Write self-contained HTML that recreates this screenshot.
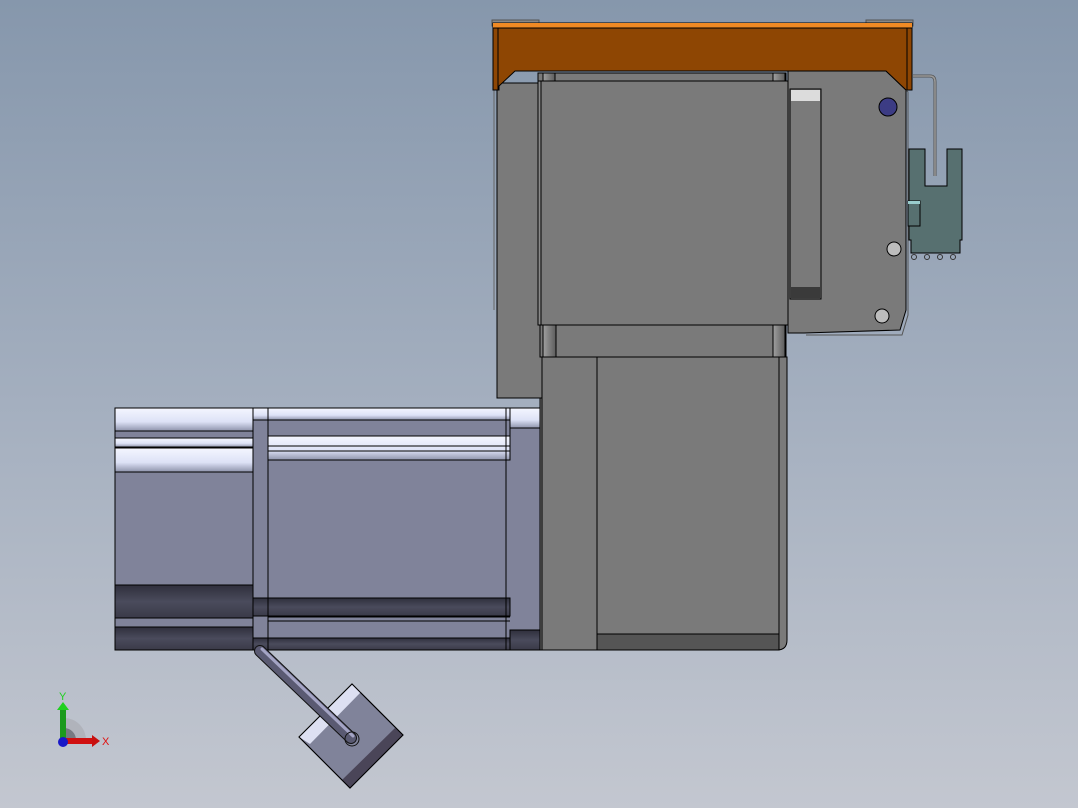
<!DOCTYPE html>
<html><head><style>
html,body{margin:0;padding:0;width:1078px;height:808px;overflow:hidden}
body{background:linear-gradient(#8697ac,#a4afbf 50%,#c3c7d0)}
svg{position:absolute;left:0;top:0}
</style></head><body>
<svg width="1078" height="808" viewBox="0 0 1078 808" xmlns="http://www.w3.org/2000/svg" font-family="Liberation Sans, sans-serif">
<defs>
<linearGradient id="hl" x1="0" y1="0" x2="0" y2="1"><stop offset="0" stop-color="#f4f6ff"/><stop offset="0.6" stop-color="#dde2f6"/><stop offset="1" stop-color="#8e93ab"/></linearGradient>
<linearGradient id="dk" x1="0" y1="0" x2="0" y2="1"><stop offset="0" stop-color="#2f2f3c"/><stop offset="0.5" stop-color="#4a4b5c"/><stop offset="1" stop-color="#3a3a48"/></linearGradient>
<linearGradient id="post" x1="0" y1="0" x2="1" y2="0"><stop offset="0" stop-color="#a0a0a0"/><stop offset="1" stop-color="#5c5c5c"/></linearGradient>
</defs>
<g stroke="#000" stroke-width="1">
<path d="M497 83 L540 83 L540 398 L598 398 L598 650 L540 650 L540 398 L498 398 Z" fill="#7a7a7a"/>
<rect x="497" y="83" width="45" height="315" fill="#7a7a7a"/>
<line x1="494" y1="90" x2="494" y2="310" stroke="#666"/>
<path d="M788 71 L886 71 L906 90 L906 310 L900 330 L804 333 L788 333 Z" fill="#7a7a7a"/>
<path d="M906 90 L908 92 L908 315 L902 335 L806 335" fill="none" stroke="#555"/>
<rect x="492" y="20" width="47" height="6" fill="#888" stroke="#555"/>
<rect x="866" y="20" width="47" height="6" fill="#888" stroke="#555"/>
<path d="M493 23 L912 23 L912 90 L906 90 L886 71 L515 71 L499 86 L499 90 L493 90 Z" fill="#8e4603"/>
<rect x="493" y="23" width="419" height="5" fill="#f08a24" stroke="none"/>
<line x1="493" y1="28" x2="912" y2="28"/>
<line x1="498" y1="28" x2="498" y2="90"/><line x1="907" y1="28" x2="907" y2="90"/>
<path d="M913 76 L930 76 Q935 76 935 82 L935 176" fill="none" stroke="#555" stroke-width="3"/>
<path d="M913 76 L930 76 Q935 76 935 82 L935 176" fill="none" stroke="#9a9a9a" stroke-width="1.5"/>
<rect x="538" y="73" width="248" height="8" fill="#7a7a7a"/>
<rect x="543" y="73" width="12" height="8" fill="url(#post)"/>
<rect x="773" y="73" width="12" height="8" fill="url(#post)"/>
<rect x="541" y="81" width="247" height="244" fill="#7a7a7a"/>
<rect x="538" y="81" width="3" height="244" fill="#888"/>
<rect x="790" y="89" width="31" height="210" fill="#7a7a7a"/>
<rect x="791" y="90" width="29" height="11" fill="#dcdcdc" stroke="none"/>
<rect x="791" y="287" width="29" height="11" fill="#3a3a3a" stroke="none"/>
<circle cx="888" cy="107" r="9" fill="#3c3c84"/>
<circle cx="894" cy="249" r="7" fill="#bdbdbd"/>
<circle cx="882" cy="316" r="7" fill="#bdbdbd"/>
<path d="M909 149 L925 149 L925 186 L947 186 L947 149 L962 149 L962 240 L960 240 L960 253 L911 253 L911 240 L909 240 Z" fill="#577070"/>
<rect x="908" y="201" width="12" height="25" fill="#577070"/>
<rect x="908" y="201" width="12" height="3" fill="#9cc" stroke="none"/>
<circle cx="914" cy="257" r="2.5" fill="none" stroke="#333"/><circle cx="927" cy="257" r="2.5" fill="none" stroke="#333"/><circle cx="940" cy="257" r="2.5" fill="none" stroke="#333"/><circle cx="953" cy="257" r="2.5" fill="none" stroke="#333"/>
<rect x="540" y="325" width="246" height="32" fill="#7a7a7a"/>
<rect x="543" y="325" width="13" height="32" fill="url(#post)"/>
<rect x="773" y="325" width="12" height="32" fill="url(#post)"/>
<rect x="597" y="357" width="182" height="293" fill="#7a7a7a"/>
<path d="M779 357 L787 357 L787 640 Q787 650 777 650 L779 650 Z" fill="#7a7a7a"/>
<rect x="597" y="634" width="182" height="16" fill="#555"/>
<rect x="542" y="357" width="55" height="293" fill="#7a7a7a"/>
<rect x="115" y="408" width="425" height="242" fill="#80839a"/>
<rect x="115" y="408" width="138" height="23" fill="url(#hl)"/>
<rect x="115" y="438" width="138" height="9" fill="url(#hl)"/>
<rect x="115" y="448" width="138" height="24" fill="url(#hl)"/>
<rect x="253" y="408" width="257" height="12" fill="url(#hl)"/>
<rect x="268" y="436" width="242" height="24" fill="url(#hl)"/>
<rect x="510" y="408" width="30" height="20" fill="url(#hl)"/>
<rect x="115" y="585" width="138" height="33" fill="url(#dk)"/>
<rect x="115" y="627" width="138" height="23" fill="url(#dk)"/>
<rect x="253" y="598" width="257" height="18" fill="url(#dk)"/>
<rect x="253" y="638" width="287" height="12" fill="url(#dk)"/>
<rect x="510" y="630" width="30" height="20" fill="url(#dk)"/>
<line x1="253" y1="408" x2="253" y2="650"/>
<line x1="268" y1="408" x2="268" y2="650"/>
<line x1="506" y1="408" x2="506" y2="650"/>
<line x1="510" y1="408" x2="510" y2="460"/>
<line x1="268" y1="446" x2="510" y2="446"/><line x1="268" y1="451" x2="510" y2="451"/>
<line x1="268" y1="617" x2="510" y2="617"/><line x1="268" y1="621" x2="510" y2="621"/>
<rect x="115" y="408" width="425" height="242" fill="none"/>
<polygon points="352,684 403,735 350,788 299,737" fill="#80839a"/>
<polygon points="352,684 361,692 310,744 299,737" fill="#dde0f2" stroke="none"/>
<polygon points="395,728 403,735 350,788 342,780" fill="#4a4558" stroke="none"/>
<polygon points="352,684 403,735 350,788 299,737" fill="none"/>
</g>
<line x1="260" y1="651" x2="351" y2="738" stroke="#111" stroke-width="12" stroke-linecap="round"/>
<line x1="260" y1="651" x2="351" y2="738" stroke="#5a5a72" stroke-width="10" stroke-linecap="round"/>
<line x1="262" y1="649" x2="353" y2="736" stroke="#a4a4c4" stroke-width="3" stroke-linecap="round"/>
<circle cx="352" cy="739" r="7" fill="none" stroke="#111"/>
<path d="M64 740 L64 718 A22 22 0 0 1 86 740 Z" fill="#b0b3bb"/>
<path d="M64 740 L64 728 A12 12 0 0 1 76 740 Z" fill="#777a82"/>
<rect x="60" y="708" width="6" height="32" fill="#1b9a1b"/>
<polygon points="57,710 63,702 69,710" fill="#1fd01f"/>
<rect x="64" y="738" width="28" height="6" fill="#d01010"/>
<polygon points="92,735 100,741 92,747" fill="#c81010"/>
<circle cx="63" cy="742" r="5" fill="#1818c8"/>
<text x="59" y="700" font-size="11" fill="#1fd01f">Y</text>
<text x="102" y="745" font-size="11" fill="#e01010">X</text>
</svg>
</body></html>
